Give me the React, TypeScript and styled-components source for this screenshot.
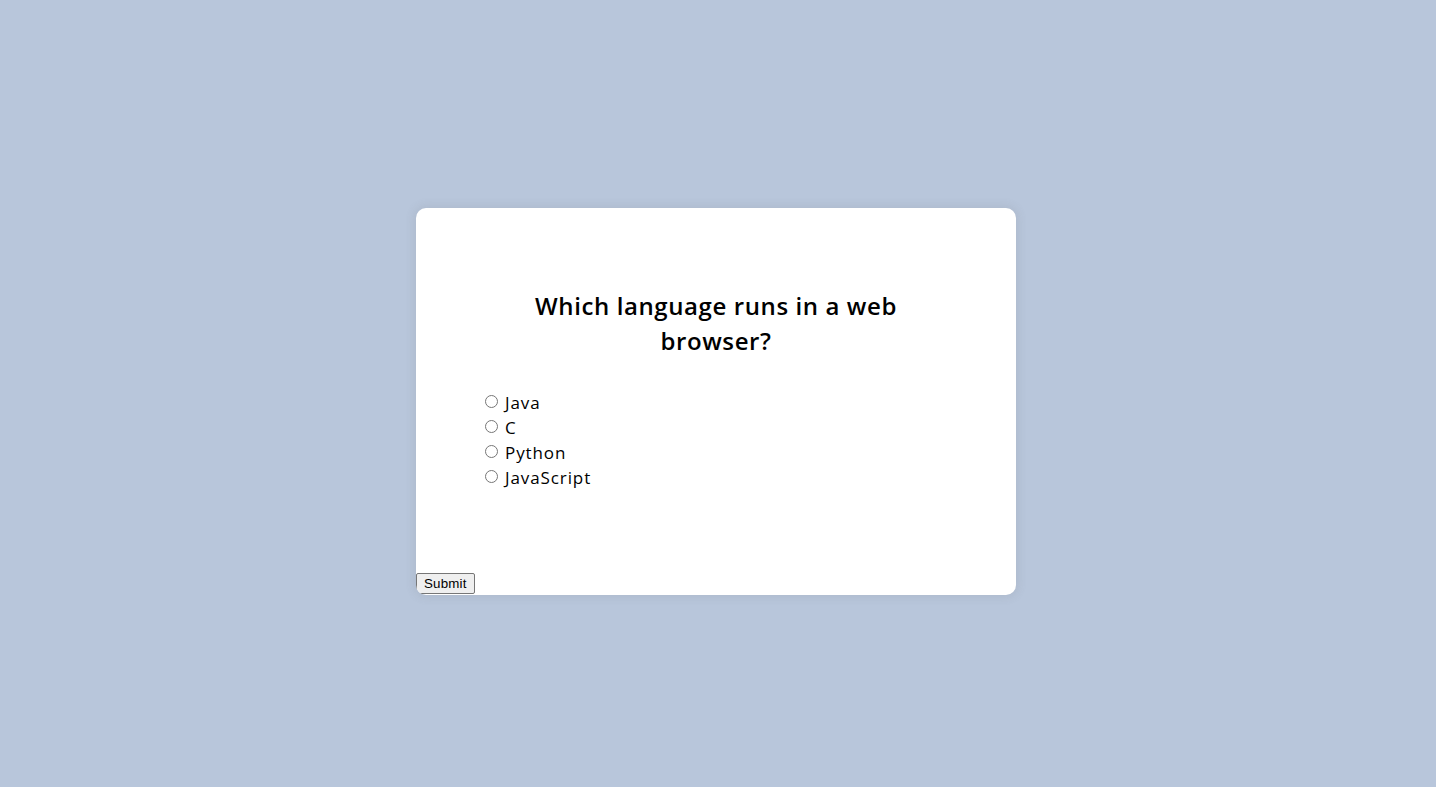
import React from "react";
import styled, { createGlobalStyle } from "styled-components";

const Global = createGlobalStyle`
  * { box-sizing: border-box; }
  html, body { margin: 0; padding: 0; }
  body {
    background: #b8c6db;
    font-family: "Open Sans", "Inter", sans-serif;
    height: 787px;
    padding: 16px 4px 0 0;
    display: flex;
    align-items: center;
    justify-content: center;
    overflow: hidden;
  }
  #root { width: 600px; }
`;

const Card = styled.div`
  background: #ffffff;
  border-radius: 10px;
  box-shadow: 0 0 10px 2px rgba(100, 100, 100, 0.12);
  width: 600px;
  overflow: hidden;
`;

const Header = styled.div`
  padding: 64px;
`;

const Title = styled.h2`
  margin: 0;
  padding: 16px;
  text-align: center;
  font-size: 24px;
  font-weight: 600;
  line-height: 35px;
  color: #000;
  letter-spacing: 0.6px;
`;

const Options = styled.ul`
  list-style: none;
  padding: 0;
  margin: 16px 0;
`;

const Option = styled.li`
  display: flex;
  align-items: center;
  height: 25px;
  font-size: 17px;
  color: #000;
`;

const Radio = styled.input`
  width: 13px;
  height: 13px;
  margin: 0 7px 0 5px;
  position: relative;
  top: -1px;
`;

const Label = styled.label`
  letter-spacing: 0.9px;
`;

const Footer = styled.div`
  height: 25px;
  display: flex;
  align-items: flex-end;
  padding-bottom: 1px;
`;

const Submit = styled.button`
  font-family: "Liberation Sans", Arial, sans-serif;
  font-size: 13.333px;
  padding: 1px 7px;
  height: 21px;
  border: 1px solid #767676;
  border-radius: 2px;
  background: #efefef;
  color: #000;
  margin: 0;
  letter-spacing: 0.2px;
`;

const answers = [
  { id: "a", text: "Java" },
  { id: "b", text: "C" },
  { id: "c", text: "Python" },
  { id: "d", text: "JavaScript" },
];

export default function App() {
  return (
    <>
      <Global />
      <Card>
        <Header>
          <Title>Which language runs in a web browser?</Title>
          <Options>
            {answers.map((a) => (
              <Option key={a.id}>
                <Radio type="radio" name="answer" id={a.id} />
                <Label htmlFor={a.id}>{a.text}</Label>
              </Option>
            ))}
          </Options>
        </Header>
        <Footer>
          <Submit>Submit</Submit>
        </Footer>
      </Card>
    </>
  );
}
